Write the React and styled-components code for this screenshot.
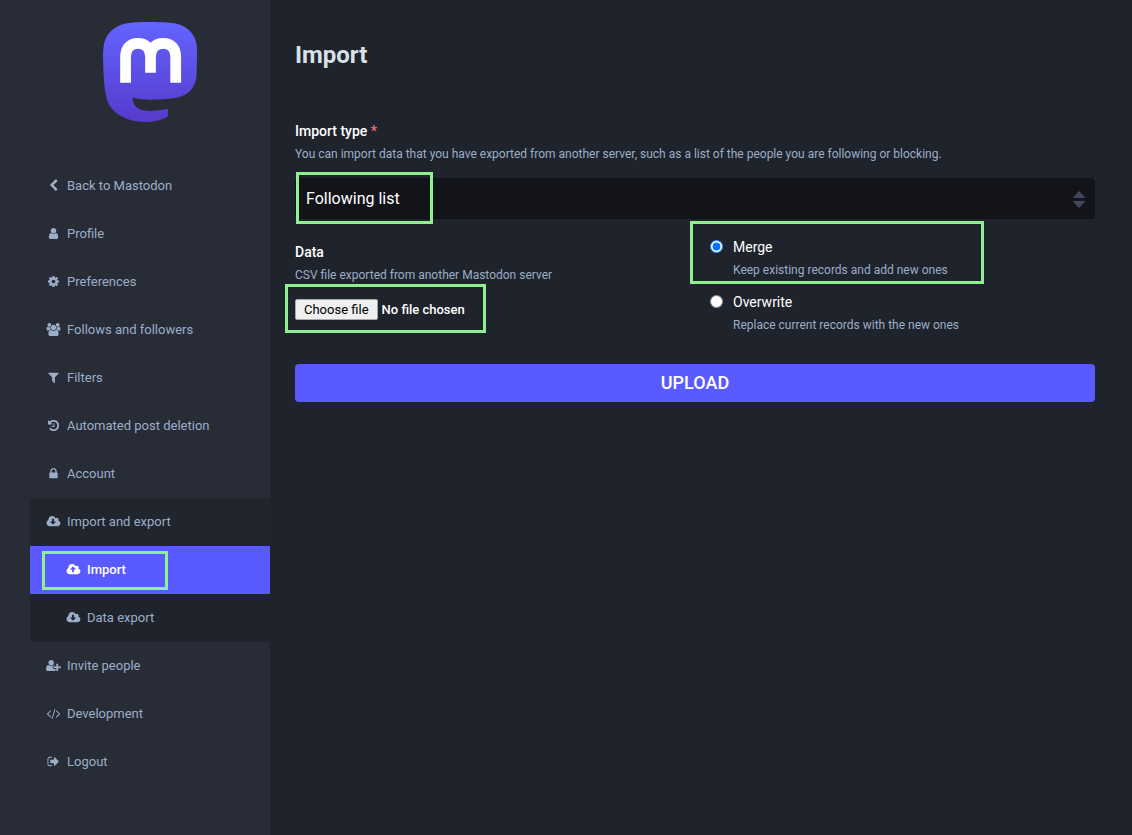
import React, {useState} from 'react';
import styled, {createGlobalStyle, css} from 'styled-components';

const GlobalStyle = createGlobalStyle`
  *, *::before, *::after {
    box-sizing: border-box;
  }

  body {
    margin: 0;
    background: #1f232b;
    color: #fff;
    font-family: Roboto, "Liberation Sans", sans-serif;
    font-size: 13px;
    line-height: 18px;
  }
`;

const Layout = styled.div`
  display: flex;
  min-height: 100vh;
`;

const Sidebar = styled.aside`
  flex: 0 0 270px;
  padding-left: 30px;
  background: #282c37;
`;

const LogoLink = styled.a`
  display: flex;
  justify-content: center;
  padding: 22px 0 40px;
`;

const NavList = styled.ul`
  margin: 0;
  padding: 0;
  list-style: none;
`;

const SubNavList = styled(NavList)`
  background: #1f232b;
`;

const NavGroup = styled.li`
  border-radius: 4px 0 0 4px;
  overflow: hidden;
  background: ${props => props.$open ? '#21252e' : 'transparent'};
`;

const NavLink = styled.a`
  display: flex;
  align-items: center;
  gap: 5px;
  padding: 15px;
  padding-left: ${props => props.$nested ? '35px' : '15px'};
  color: ${props => props.$active ? '#fff' : '#9baec8'};
  font-weight: ${props => props.$active ? 500 : 400};
  background: ${props => props.$active ? '#595aff' : 'transparent'};
  text-decoration: none;
`;

const NavIcon = styled.svg`
  flex: none;
  width: 17px;
  height: 13px;
  margin-bottom: 1px;
  fill: currentColor;
`;

const marked = css`
  position: relative;

  &::after {
    content: '';
    position: absolute;
    border: 3px solid #90f090;
    pointer-events: none;
  }
`;

const MarkedLink = styled(NavLink)`
  ${marked}

  &::after {
    inset: 5px 102px 4px 12px;
  }
`;

const Content = styled.main`
  flex: 1;
  min-width: 0;
  padding: 41px 37px 40px 25px;
`;

const Title = styled.h1`
  margin: 0 0 52px;
  color: #d9e1e8;
  font-size: 24px;
  font-weight: 700;
  line-height: 28px;
`;

const Form = styled.form`
  max-width: 800px;
`;

const Label = styled.label`
  display: block;
  font-size: 14px;
  font-weight: ${props => props.$plain ? 400 : 500};
  line-height: 20px;
`;

const Required = styled.abbr`
  color: #e87487;
  text-decoration: none;
`;

const Hint = styled.p`
  margin: 5px 0 0;
  color: #9baec8;
  font-size: 12px;
  line-height: 16px;
`;

const SelectWrapper = styled.div`
  ${marked}
  margin-top: 16px;

  &::after {
    top: -6px;
    bottom: -5px;
    left: 1px;
    width: 137px;
  }
`;

const Select = styled.select`
  display: block;
  width: 100%;
  height: 41px;
  padding: 0 30px 0 10px;
  appearance: none;
  border: 1px solid #101216;
  border-radius: 4px;
  background: #131419;
  color: #fff;
  font-family: inherit;
  font-size: 16px;
`;

const SelectArrows = styled.svg`
  position: absolute;
  top: 13px;
  right: 9px;
  fill: #42485a;
  pointer-events: none;
`;

const FieldsRow = styled.div`
  display: grid;
  grid-template-columns: 1fr 1fr;
  gap: 20px;
  margin: 18px 0 31px;
`;

const FileField = styled.div`
  padding-top: 5px;
`;

const FilePicker = styled.div`
  ${marked}
  display: flex;
  align-items: center;
  width: fit-content;
  margin-top: 16px;
  gap: 4px;
  font-weight: 500;

  &::after {
    inset: -15px -21px -13px -10px;
  }
`;

const FileInput = styled.input`
  position: absolute;
  inset: 0;
  width: 100%;
  opacity: 0;
  cursor: pointer;
`;

const FileButton = styled.span`
  padding: 1px 8px;
  border: 1px solid #a8a8a8;
  border-radius: 2px;
  background: #efefef;
  color: #000;
  font-weight: 400;
  line-height: 17px;
`;

const Choices = styled.div`
  display: grid;
  align-content: start;
  gap: 14px;
  padding-left: 5px;
`;

const Choice = styled.div`
  display: grid;
  grid-template-columns: 13px 1fr;
  column-gap: 10px;

  ${props => props.$marked && css`
    ${marked}

    &::after {
      top: -16px;
      bottom: -6px;
      left: -20px;
      width: 294px;
    }
  `}
`;

const Radio = styled.input`
  width: 13px;
  height: 13px;
  margin: 3px 0 0;
`;

const SubmitButton = styled.button`
  display: block;
  width: 100%;
  padding: 10px;
  border: 0;
  border-radius: 4px;
  background: #595aff;
  color: #fff;
  font-family: inherit;
  font-size: 18px;
  font-weight: 500;
  line-height: 18px;
  text-transform: uppercase;
  cursor: pointer;
`;

const CLOUD = 'm640 288q0 159-112.5 271.5t-271.5 112.5h-1088q-185 0-316.5-131.5t-131.5-316.5q0-130 70-240t188-165q-2-30-2-43 0-212 150-362t362-150q156 0 285.5 87t188.5 231q71-62 166-62 106 0 181 75t75 181q0 76-41 138 130 31 213.5 135.5t83.5 238.5z';

const ICONS = {
  back: {
    viewBox: '256 0 1280 1792',
    d: 'M1427 301l-531 531 531 531q19 19 19 45t-19 45l-166 166q-19 19-45 19t-45-19l-742-742q-19-19-19-45t19-45l742-742q19-19 45-19t45 19l166 166q19 19 19 45t-19 45z',
  },
  user: {
    viewBox: '0 0 1792 1792',
    d: 'M1536 1399q0 109-62.5 187t-150.5 78h-854q-88 0-150.5-78t-62.5-187q0-85 8.5-160.5t31.5-152 58.5-131 94-89 134.5-34.5q131 128 313 128t313-128q76 0 134.5 34.5t94 89 58.5 131 31.5 152 8.5 160.5zm-256-887q0 159-112.5 271.5t-271.5 112.5-271.5-112.5-112.5-271.5 112.5-271.5 271.5-112.5 271.5 112.5 112.5 271.5z',
  },
  cog: {
    viewBox: '0 0 1792 1792',
    d: 'M1152 896q0-106-75-181t-181-75-181 75-75 181 75 181 181 75 181-75 75-181zm512-109v222q0 12-8 23t-20 13l-185 28q-19 54-39 91 35 50 107 138 10 12 10 25t-9 23q-27 37-99 108t-94 71q-12 0-26-9l-138-108q-44 23-91 38-16 136-29 186-7 28-36 28h-222q-14 0-24.5-8.5t-11.5-21.5l-28-184q-49-16-90-37l-141 107q-10 9-25 9-14 0-25-11-126-114-165-168-7-10-7-23 0-12 8-23 15-21 51-66.5t54-70.5q-27-50-41-99l-183-27q-13-2-21-12.5t-8-23.5v-222q0-12 8-23t19-13l186-28q14-46 39-92-40-57-107-138-10-12-10-24 0-10 9-23 26-36 98.5-107.5t94.5-71.5q13 0 26 10l138 107q44-23 91-38 16-136 29-186 7-28 36-28h222q14 0 24.5 8.5t11.5 21.5l28 184q49 16 90 37l142-107q9-9 24-9 13 0 25 10 129 119 165 170 7 8 7 22 0 12-8 23-15 21-51 66.5t-54 70.5q26 50 41 98l183 28q13 2 21 12.5t8 23.5z',
  },
  users: {
    viewBox: '-64 0 1920 1792',
    d: 'M529 896q-162 5-265 128h-134q-82 0-138-40.5t-56-118.5q0-353 124-353 6 0 43.5 21t97.5 42.5 119 21.5q67 0 133-23-5 37-5 66 0 139 81 256zm1071 637q0 120-73 189.5t-194 69.5h-874q-121 0-194-69.5t-73-189.5q0-53 3.5-103.5t14-109 26.5-108.5 43-97.5 62-81 85.5-53.5 111.5-20q10 0 43 21.5t73 48 107 48 135 21.5 135-21.5 107-48 73-48 43-21.5q61 0 111.5 20t85.5 53.5 62 81 43 97.5 26.5 108.5 14 109 3.5 103.5zm-1024-1277q0 106-75 181t-181 75-181-75-75-181 75-181 181-75 181 75 75 181zm704 384q0 159-112.5 271.5t-271.5 112.5-271.5-112.5-112.5-271.5 112.5-271.5 271.5-112.5 271.5 112.5 112.5 271.5zm576 225q0 78-56 118.5t-138 40.5h-134q-103-123-265-128 81-117 81-256 0-29-5-66 66 23 133 23 59 0 119-21.5t97.5-42.5 43.5-21q124 0 124 353zm-128-609q0 106-75 181t-181 75-181-75-75-181 75-181 181-75 181 75 75 181z',
  },
  filter: {
    viewBox: '0 0 1792 1792',
    d: 'M1595 295q17 41-14 70l-493 493v742q0 42-39 59-13 5-25 5-27 0-45-19l-256-256q-19-19-19-45v-486l-493-493q-31-29-14-70 17-39 59-39h1280q42 0 59 39z',
  },
  history: {
    viewBox: '0 0 1792 1792',
    d: 'M1664 896q0 156-61 298t-164 245-245 164-298 61q-172 0-327-72.5t-264-204.5q-7-10-6.5-22.5t8.5-20.5l137-138q10-9 25-9 16 2 23 12 73 95 179 147t225 52q104 0 198.5-40.5t163.5-109.5 109.5-163.5 40.5-198.5-40.5-198.5-109.5-163.5-163.5-109.5-198.5-40.5q-98 0-188 35.5t-160 101.5l137 138q31 30 14 69-17 40-59 40h-448q-26 0-45-19t-19-45v-448q0-42 40-59 39-17 69 14l130 129q107-101 244.5-156.5t284.5-55.5q156 0 298 61t245 164 164 245 61 298zm-640-288v448q0 14-9 23t-23 9h-320q-14 0-23-9t-9-23v-64q0-14 9-23t23-9h224v-352q0-14 9-23t23-9h64q14 0 23 9t9 23z',
  },
  lock: {
    viewBox: '0 0 1792 1792',
    d: 'M640 768h512v-192q0-106-75-181t-181-75-181 75-75 181v192zm832 96v576q0 40-28 68t-68 28h-960q-40 0-68-28t-28-68v-576q0-40 28-68t68-28h32v-192q0-184 132-316t316-132 316 132 132 316v192h32q40 0 68 28t28 68z',
  },
  download: {
    viewBox: '-64 0 1920 1792',
    d: 'M1216 928q0-14-9-23t-23-9h-224v-352q0-13-9.5-22.5t-22.5-9.5h-192q-13 0-22.5 9.5t-9.5 22.5v352h-224q-13 0-22.5 9.5t-9.5 22.5q0 14 9 23l352 352q9 9 23 9t23-9l351-351q10-12 10-24zm0-64' + CLOUD,
  },
  upload: {
    viewBox: '-64 0 1920 1792',
    d: 'M1216 864q0-14-9-23l-352-352q-9-9-23-9t-23 9l-351 351q-10 12-10 24 0 14 9 23t23 9h224v352q0 13 9.5 22.5t22.5 9.5h192q13 0 22.5-9.5t9.5-22.5v-352h224q13 0 22.5-9.5t9.5-22.5z' + CLOUD,
  },
  invite: {
    viewBox: '0 0 2048 1792',
    d: 'M704 896q-159 0-271.5-112.5t-112.5-271.5 112.5-271.5 271.5-112.5 271.5 112.5 112.5 271.5-112.5 271.5-271.5 112.5zm960 128h352q13 0 22.5 9.5t9.5 22.5v192q0 13-9.5 22.5t-22.5 9.5h-352v352q0 13-9.5 22.5t-22.5 9.5h-192q-13 0-22.5-9.5t-9.5-22.5v-352h-352q-13 0-22.5-9.5t-9.5-22.5v-192q0-13 9.5-22.5t22.5-9.5h352v-352q0-13 9.5-22.5t22.5-9.5h192q13 0 22.5 9.5t9.5 22.5v352zm-736 224q0 52 38 90t90 38h256v238q-68 50-171 50h-874q-121 0-194-69t-73-190q0-53 3.5-103.5t14-109 26.5-108.5 43-97.5 62-81 85.5-53.5 111.5-20q19 0 39 17 79 61 154.5 91.5t164.5 30.5 164.5-30.5 154.5-91.5q20-17 39-17 132 0 217 96h-223q-52 0-90 38t-38 90v192z',
  },
  code: {
    viewBox: '-64 0 1920 1792',
    d: 'M553 1399l-50 50q-10 10-23 10t-23-10l-466-466q-10-10-10-23t10-23l466-466q10-10 23-10t23 10l50 50q10 10 10 23t-10 23l-393 393 393 393q10 10 10 23t-10 23zm591-1067l-373 1291q-4 13-15.5 19.5t-23.5 2.5l-62-17q-13-4-19.5-15.5t-2.5-24.5l373-1291q4-13 15.5-19.5t23.5-2.5l62 17q13 4 19.5 15.5t2.5 24.5zm657 651l-466 466q-10 10-23 10t-23-10l-50-50q-10-10-10-23t10-23l393-393-393-393q-10-10-10-23t10-23l50-50q10-10 23-10t23 10l466 466q10 10 10 23t-10 23z',
  },
  logout: {
    viewBox: '0 0 1792 1792',
    d: 'M704 1440q0 4 1 20t.5 26.5-3 23.5-10 19.5-20.5 6.5h-320q-119 0-203.5-84.5t-84.5-203.5v-704q0-119 84.5-203.5t203.5-84.5h320q13 0 22.5 9.5t9.5 22.5q0 4 1 20t.5 26.5-3 23.5-10 19.5-20.5 6.5h-320q-66 0-113 47t-47 113v704q0 66 47 113t113 47h312l11.5 1 11.5 3 8 5.5 7 9 2 13.5zm928-544q0 26-19 45l-544 544q-19 19-45 19t-45-19-19-45v-288h-448q-26 0-45-19t-19-45v-384q0-26 19-45t45-19h448v-288q0-26 19-45t45-19 45 19l544 544q19 19 19 45z',
  },
};

const NAV_ITEMS = [
  {icon: 'back', text: 'Back to Mastodon'},
  {icon: 'user', text: 'Profile'},
  {icon: 'cog', text: 'Preferences'},
  {icon: 'users', text: 'Follows and followers'},
  {icon: 'filter', text: 'Filters'},
  {icon: 'history', text: 'Automated post deletion'},
  {icon: 'lock', text: 'Account'},
  {
    icon: 'download',
    text: 'Import and export',
    children: [
      {icon: 'upload', text: 'Import', active: true},
      {icon: 'download', text: 'Data export'},
    ],
  },
  {icon: 'invite', text: 'Invite people'},
  {icon: 'code', text: 'Development'},
  {icon: 'logout', text: 'Logout'},
];

const MODES = [
  {id: 'merge', text: 'Merge', hint: 'Keep existing records and add new ones', marked: true},
  {id: 'overwrite', text: 'Overwrite', hint: 'Replace current records with the new ones'},
];

const Icon = ({name}) => (
  <NavIcon viewBox={ICONS[name].viewBox} aria-hidden="true">
    <path d={ICONS[name].d} />
  </NavIcon>
);

const Logo = () => (
  <svg width="95" height="100" viewBox="0 0 75 79" aria-hidden="true">
    <defs>
      <linearGradient id="logo-fill" x1="0" y1="0" x2="0" y2="1">
        <stop offset="0" stopColor="#6364ff" />
        <stop offset="1" stopColor="#563acc" />
      </linearGradient>
    </defs>
    <path
      fill="url(#logo-fill)"
      d="M73.84 17.49C72.7 9 65.3 2.31 56.53 1.02 55.05.8 49.44 0 36.46 0h-.1C23.37 0 20.59.8 19.1 1.02 10.58 2.28 2.8 8.29.9 16.88 0 21.1-.1 25.8.07 30.1c.24 6.17.29 12.32.85 18.47.38 4.08 1.06 8.12 2.02 12.11 1.8 7.36 9.06 13.49 16.18 15.99 7.63 2.6 15.83 3.04 23.68 1.25.87-.2 1.72-.44 2.56-.7 1.91-.61 4.15-1.29 5.8-2.48l.07-.14v-5.96l-.21-.17c-4.92 1.18-9.97 1.79-15.04 1.78-8.71 0-11.06-4.22-11.73-5.97-.54-1.52-.89-3.1-1.02-4.71 4.98 1.2 10.04 1.8 15.14 1.79 1.23 0 2.45 0 3.68-.04 5.13-.14 10.54-.4 15.59-1.4 7.96-1.55 15.54-6.4 16.31-18.68.03-.48.1-5.06.1-5.56.01-1.71.55-12.09-.2-18.43z"
    />
    <path
      fill="none"
      stroke="#fff"
      strokeWidth="8.5"
      d="M17.8 48V27.5C17.8 21 21.4 16.8 27.6 16.8S37.5 21 37.5 27.5V40M37.5 27.5C37.5 21 41.3 16.8 47.6 16.8S57.4 21 57.4 27.5V48"
    />
  </svg>
);

const NavItem = ({item, nested}) => {
  const Link = item.active ? MarkedLink : NavLink;

  return (
    <>
      <Link href="#" $nested={nested} $active={item.active}>
        <Icon name={item.icon} />
        {item.text}
      </Link>
      {item.children && (
        <SubNavList>
          {item.children.map(child => (
            <li key={child.text}>
              <NavItem item={child} nested />
            </li>
          ))}
        </SubNavList>
      )}
    </>
  );
};

const App = () => {
  const [mode, setMode] = useState('merge');
  const [fileName, setFileName] = useState('');

  const onFileChange = (event) => {
    const file = event.target.files[0];
    setFileName(file ? file.name : '');
  };

  return (
    <>
      <GlobalStyle />
      <Layout>
        <Sidebar>
          <LogoLink href="#" aria-label="Mastodon">
            <Logo />
          </LogoLink>
          <nav>
            <NavList>
              {NAV_ITEMS.map(item => (
                <NavGroup key={item.text} $open={Boolean(item.children)}>
                  <NavItem item={item} />
                </NavGroup>
              ))}
            </NavList>
          </nav>
        </Sidebar>
        <Content>
          <Title>Import</Title>
          <Form onSubmit={event => event.preventDefault()}>
            <Label htmlFor="import-type">
              Import type <Required title="required">*</Required>
            </Label>
            <Hint>
              You can import data that you have exported from another server, such as a list of the people you are following or blocking.
            </Hint>
            <SelectWrapper>
              <Select id="import-type" defaultValue="following">
                <option value="following">Following list</option>
              </Select>
              <SelectArrows width="14" height="17" viewBox="0 0 14 17" aria-hidden="true">
                <path d="M7 0l6.5 7H.5zM7 17L.5 10h13z" />
              </SelectArrows>
            </SelectWrapper>
            <FieldsRow>
              <FileField>
                <Label htmlFor="import-data">Data</Label>
                <Hint>CSV file exported from another Mastodon server</Hint>
                <FilePicker>
                  <FileButton>Choose file</FileButton>
                  <span>{fileName || 'No file chosen'}</span>
                  <FileInput id="import-data" type="file" onChange={onFileChange} />
                </FilePicker>
              </FileField>
              <Choices>
                {MODES.map(item => (
                  <Choice key={item.id} $marked={item.marked}>
                    <Radio
                      id={item.id}
                      type="radio"
                      name="mode"
                      checked={mode === item.id}
                      onChange={() => setMode(item.id)}
                    />
                    <div>
                      <Label $plain htmlFor={item.id}>{item.text}</Label>
                      <Hint>{item.hint}</Hint>
                    </div>
                  </Choice>
                ))}
              </Choices>
            </FieldsRow>
            <SubmitButton type="submit">Upload</SubmitButton>
          </Form>
        </Content>
      </Layout>
    </>
  );
};

export default App;
